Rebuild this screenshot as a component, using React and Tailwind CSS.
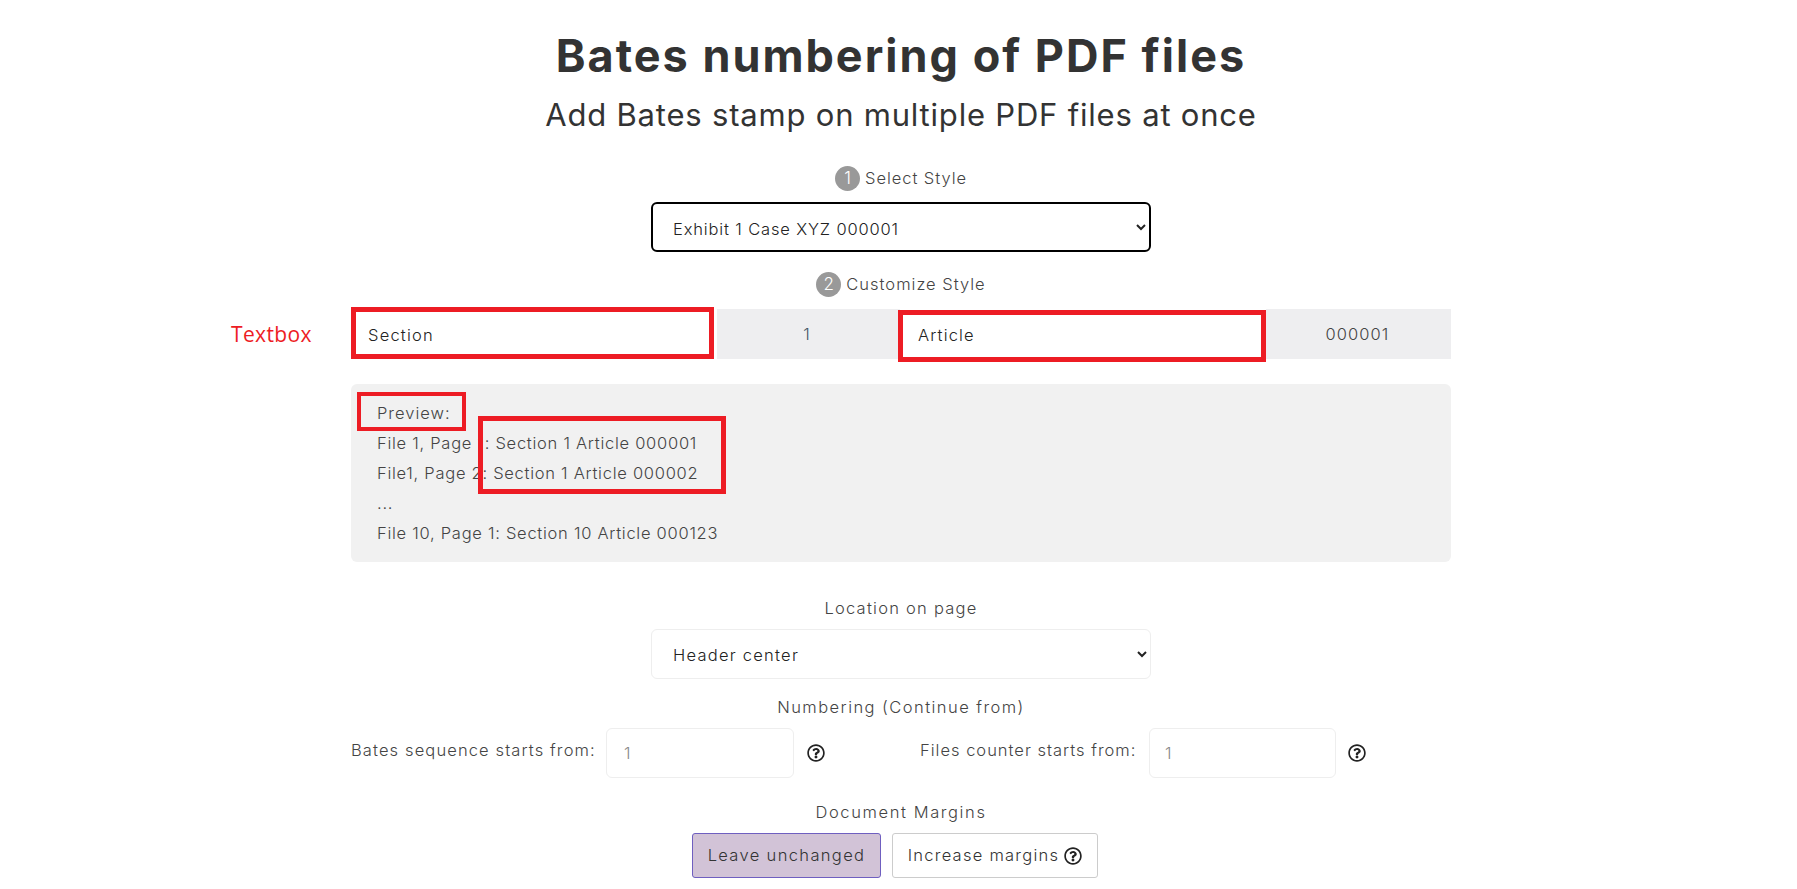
import React from "react";
import { FaRegQuestionCircle } from "react-icons/fa";

const font = "[font-family:Inter,'Liberation_Sans',sans-serif]";

function Step({ n, children, className }) {
  return (
    <div className={`flex items-center justify-center gap-[5px] text-[16.5px] text-[#444] ${className}`}>
      <span className="flex h-[25px] w-[25px] items-center justify-center rounded-full bg-[#999] text-[17px] text-white">{n}</span>
      {children}
    </div>
  );
}

function Help({ className = "" }) {
  return <FaRegQuestionCircle className={`h-[18px] w-[18px] text-[#222] ${className}`} />;
}

function Red({ className }) {
  return <div className={`pointer-events-none absolute border-[#ed1c24] ${className}`} />;
}

export default function App() {
  return (
    <div className={`min-h-[889px] overflow-hidden bg-white text-[16.5px] font-light text-[#444] ${font}`}>
      <div className="relative ml-[351px] flex w-[1100px] flex-col items-center">
        <h1 className="mt-[27px] text-[45px] leading-[58px] font-bold tracking-[2px] text-[#333]">Bates numbering of PDF files</h1>
        <h2 className="mt-[10px] text-[31px] leading-[40px] font-normal tracking-[0.8px] text-[#333]">Add Bates stamp on multiple PDF files at once</h2>

        <Step n="1" className="mt-[31px]"><span className="tracking-[0.95px]">Select Style</span></Step>
        <select defaultValue="a" className="mt-[11px] h-[50px] w-[500px] rounded-[6px] border-2 border-black bg-white pt-[3px] pl-[16px] pr-[7px] tracking-[0.85px] text-[#222]">
          <option value="a">Exhibit 1 Case XYZ 000001</option>
        </select>

        <Step n="2" className="mt-[20px]"><span className="tracking-[1px]">Customize Style</span></Step>

        <div className="mt-[12px] grid h-[50px] w-full grid-cols-[366px_183px_366px_185px] bg-[#eeeef0] text-center text-[#444]">
          <input defaultValue="Section" className="h-full w-full bg-white pt-[1px] pl-[17px] tracking-[1.2px] text-[#222] outline-none" />
          <div className="flex items-center justify-center pr-[4px] text-[#445566]">1</div>
          <input defaultValue="Article" className="h-full w-full bg-white pt-[1px] pl-[18px] tracking-[1.15px] text-[#222] outline-none" />
          <div className="flex items-center justify-center pr-[2px] tracking-[1.05px]">000001</div>
        </div>

        <div className="mt-[25px] h-[178px] w-full rounded-[6px] bg-[#f1f1f1] px-[26px] py-[14px] leading-[30px] tracking-[0.73px] text-[#444]">
          <div className="tracking-[1px]">Preview:</div>
          <div>File 1, Page 1: Section 1 Article 000001</div>
          <div>File1, Page 2: Section 1 Article 000002</div>
          <div>...</div>
          <div>File 10, Page 1: Section 10 Article 000123</div>
        </div>

        <div className="mt-[34px] leading-[24px] tracking-[1.25px]">Location on page</div>
        <select defaultValue="h" className="mt-[9px] h-[50px] w-[500px] rounded-[6px] border border-[#eeeeee] bg-white pt-[2px] pl-[17px] pr-[7px] tracking-[1.25px] text-[#222]">
          <option value="h">Header center</option>
        </select>

        <div className="mt-[16px] leading-[24px] tracking-[1.45px]">Numbering (Continue from)</div>

        <div className="mt-[9px] flex h-[50px] w-full items-center">
          <span className="w-[243px] pb-[5px] tracking-[1.12px] whitespace-nowrap">Bates sequence starts from:</span>
          <input defaultValue="1" className="ml-[12px] h-[50px] w-[188px] rounded-[6px] border border-[#eeeeee] bg-white pl-[17px] text-[#888] outline-none" />
          <Help className="ml-[13px]" />
          <span className="ml-[95px] w-[217px] pb-[5px] tracking-[1px] whitespace-nowrap">Files counter starts from:</span>
          <input defaultValue="1" className="ml-[12px] h-[50px] w-[187px] rounded-[6px] border border-[#eeeeee] bg-white pl-[15px] text-[#888] outline-none" />
          <Help className="ml-[12px]" />
        </div>

        <div className="mt-[22px] leading-[24px] tracking-[1.6px]">Document Margins</div>

        <div className="mt-[9px] mr-[12px] flex gap-[11px]">
          <button className="h-[45px] w-[189px] rounded-[3px] border border-[#6f5fc0] bg-[#d2c3d7] tracking-[1.35px] text-[#333]">Leave unchanged</button>
          <button className="flex h-[45px] w-[206px] items-center justify-center gap-[5px] rounded-[3px] border border-[#cccccc] bg-white text-[#333]">
            <span className="tracking-[1.25px]">Increase margins</span> <Help />
          </button>
        </div>

        <div className="absolute top-[320px] left-[-120px] text-[21px] leading-[28px] font-normal tracking-[0.35px] text-[#ed1c24] [font-family:'Open_Sans',sans-serif]">Textbox</div>
        <Red className="top-[307px] left-0 h-[52px] w-[363px] border-[5px]" />
        <Red className="top-[310px] left-[547px] h-[52px] w-[368px] border-[5px]" />
        <Red className="top-[392px] left-[6px] h-[39px] w-[109px] border-[4px]" />
        <Red className="top-[416px] left-[127px] h-[78px] w-[248px] border-[5px]" />
      </div>
    </div>
  );
}
